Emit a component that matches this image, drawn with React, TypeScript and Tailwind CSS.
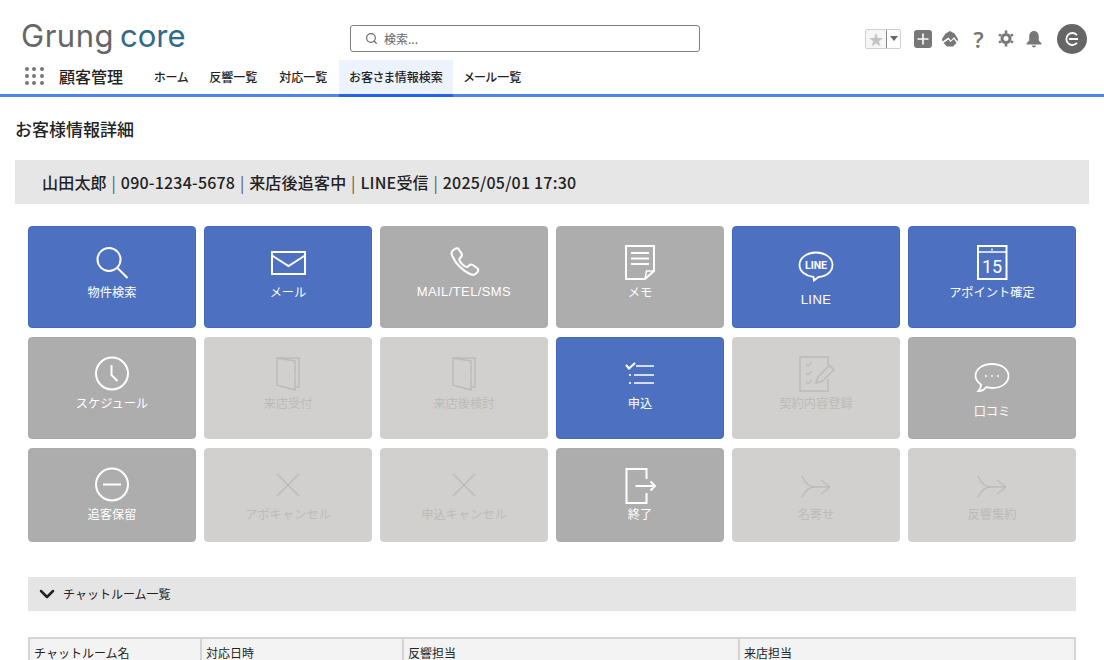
import { ChevronDown, Search } from "lucide-react";
import type { ReactNode } from "react";

const jp = { fontFamily: '"Noto Sans CJK JP", "Noto Sans", sans-serif' };

function Svg({ children }: { children: ReactNode }) {
  return (
    <svg width="44" height="44" viewBox="0 0 44 44" fill="none" stroke="currentColor" strokeWidth="2">
      {children}
    </svg>
  );
}

const icons: Record<string, ReactNode> = {
  search: (
    <Svg>
      <circle cx="19" cy="19.5" r="11.5" />
      <path d="M27.5 28 L37.5 38" />
    </Svg>
  ),
  mail: (
    <Svg>
      <rect x="6" y="12" width="33" height="22" />
      <path d="M6 15.5 L22.5 26 L39 15.5" />
    </Svg>
  ),
  phone: (
    <Svg>
      <path d="M12 9.5 C9.5 11 9 13.5 10.5 16.5 C14 24 20 30 28 34 C31 35.5 34 34.5 35.5 32 C36.5 30.5 36.5 29 35 28 L30.5 24.8 C29 24 28 24.4 27 25.5 L25.5 27 C24 27.5 22.5 26.5 20.5 24.5 C18.5 22.5 17 20 17.5 18.5 L19 17 C20 16 20.2 15 19.5 13.5 L16.5 9 C15.5 7.5 13.5 8.5 12 9.5 Z" />
    </Svg>
  ),
  memo: (
    <Svg>
      <path d="M27 39 H8 V6 H36 V31 Z" />
      <path d="M13 13 H31 M13 18.5 H31 M13 24 H31" />
      <path d="M36 31 H28.5 L27 39" strokeWidth="1.5" />
    </Svg>
  ),
  line: (
    <svg width="44" height="44" viewBox="0 0 44 44" fill="none">
      <g transform="translate(0 1.5)">
        <path
          d="M22 7 C31.5 7 38.5 12.5 38.5 19.5 C38.5 26 32.5 31 24.5 31.5 L20 35 L19.5 31.5 C11.5 30.5 5.5 26 5.5 19.5 C5.5 12.5 12.5 7 22 7 Z"
          stroke="currentColor"
          strokeWidth="1.8"
        />
        <text x="22" y="23.5" textAnchor="middle" fill="currentColor" fontSize="10.5" fontWeight="700" fontFamily="Roboto, sans-serif">
          LINE
        </text>
      </g>
    </svg>
  ),
  calendar: (
    <svg width="44" height="44" viewBox="0 0 44 44" fill="none" stroke="currentColor" strokeWidth="2">
      <rect x="8" y="6" width="28.5" height="33" />
      <path d="M8 12 H36.5" strokeWidth="1.5" />
      <circle cx="22" cy="9.5" r="0.9" fill="currentColor" stroke="none" />
      <text x="22" y="33" textAnchor="middle" fill="currentColor" stroke="none" fontSize="18" fontFamily="Roboto, sans-serif">
        15
      </text>
    </svg>
  ),
  clock: (
    <Svg>
      <circle cx="22" cy="22.5" r="16" />
      <path d="M21.5 14 V24 L27.5 30" />
    </Svg>
  ),
  door: (
    <Svg>
      <path d="M11 7 H33 V36 H29" strokeWidth="1.5" />
      <path d="M11 7 L29 10 V39 L11 34 Z" strokeWidth="1.5" />
      <circle cx="23" cy="25" r="0.7" fill="currentColor" stroke="none" />
    </Svg>
  ),
  checklist: (
    <Svg>
      <path d="M8 14 L11 17.5 L17 12" strokeWidth="2" />
      <path d="M18 15 H36 M16 24 H36 M16 32 H36" strokeWidth="1.6" />
      <circle cx="12" cy="24" r="1.1" fill="currentColor" stroke="none" />
      <circle cx="12" cy="32" r="1.1" fill="currentColor" stroke="none" />
    </Svg>
  ),
  contract: (
    <Svg>
      <path d="M34 14 V6 H6 V40 H34 V28" strokeWidth="1.5" />
      <path d="M12 13 L14 15 L18 11 M12 22 L14 24 L18 20 M12 31 L14 33 L18 29" strokeWidth="1.2" />
      <path d="M22 32 L24 26 L35.5 14.5 L40 18.5 L28.5 30 Z" strokeWidth="1.5" />
    </Svg>
  ),
  chat: (
    <Svg>
      <path
        d="M22 9 C31.5 9 38.5 14 38.5 21 C38.5 28 31.5 33 22 33 C20 33 18 32.7 16 32.2 C14.5 34.5 12 36 8.5 36 C10 34.5 11 32 11 29.5 C7.5 27 5.5 24.5 5.5 21 C5.5 14 12.5 9 22 9 Z"
        strokeWidth="1.8"
      />
      <circle cx="16" cy="21" r="0.9" fill="currentColor" stroke="none" />
      <circle cx="22" cy="21" r="0.9" fill="currentColor" stroke="none" />
      <circle cx="28" cy="21" r="0.9" fill="currentColor" stroke="none" />
    </Svg>
  ),
  minus: (
    <Svg>
      <circle cx="22" cy="22.5" r="16" />
      <path d="M13 22.5 H31" />
    </Svg>
  ),
  cross: (
    <Svg>
      <path d="M11 12 L33 34 M33 12 L11 34" strokeWidth="1.3" />
    </Svg>
  ),
  exit: (
    <Svg>
      <path d="M28.5 17 V7 H8.5 V41 H28.5 V31" />
      <path d="M17.5 24 H37 M32.5 19.5 L37 24 L32.5 28.5" />
    </Svg>
  ),
  merge: (
    <Svg>
      <path d="M8 14 C11 21 15 25 21 25 H36 M8 35 C11 29 15 25 21 25 M27 18 L36 25 L27 32" strokeWidth="1.3" />
    </Svg>
  ),
};

type Kind = "blue" | "gray" | "off";

const buttons: { label: string; icon: string; kind: Kind; low?: boolean; latin?: boolean }[] = [
  { label: "物件検索", icon: "search", kind: "blue" },
  { label: "メール", icon: "mail", kind: "blue" },
  { label: "MAIL/TEL/SMS", icon: "phone", kind: "gray", latin: true },
  { label: "メモ", icon: "memo", kind: "gray" },
  { label: "LINE", icon: "line", kind: "blue", low: true, latin: true },
  { label: "アポイント確定", icon: "calendar", kind: "blue" },
  { label: "スケジュール", icon: "clock", kind: "gray" },
  { label: "来店受付", icon: "door", kind: "off" },
  { label: "来店後検討", icon: "door", kind: "off" },
  { label: "申込", icon: "checklist", kind: "blue" },
  { label: "契約内容登録", icon: "contract", kind: "off" },
  { label: "口コミ", icon: "chat", kind: "gray", low: true },
  { label: "追客保留", icon: "minus", kind: "gray" },
  { label: "アポキャンセル", icon: "cross", kind: "off" },
  { label: "申込キャンセル", icon: "cross", kind: "off" },
  { label: "終了", icon: "exit", kind: "gray" },
  { label: "名寄せ", icon: "merge", kind: "off" },
  { label: "反響集約", icon: "merge", kind: "off" },
];

const kindClass: Record<Kind, string> = {
  blue: "bg-[#4d71c0] border-[#4268bd] text-white",
  gray: "bg-[#adadad] border-[#a9a9a9] text-white",
  off: "bg-[#d1d0ce] border-[#d1d0ce] text-[#bcbbb9]",
};

function ActionButton({ label, icon, kind, low, latin }: (typeof buttons)[number]) {
  return (
    <button className={`flex flex-col items-center rounded-[4px] border pt-[13px] ${kindClass[kind]}`}>
      <span className={`flex w-[44px] justify-center ${low ? "h-[52px] items-center" : "h-[44px]"}`}>{icons[icon]}</span>
      <span
        className={`-mt-[1px] leading-[18px] ${latin ? "text-[13px] tracking-[0.4px]" : "text-[12.25px]"}`}
        style={latin ? { fontFamily: '"Liberation Sans", sans-serif' } : undefined}
      >
        {label}
      </span>
    </button>
  );
}

function Header() {
  return (
    <header className="border-b-[3px] border-[#4a86f0]">
      <div className="flex h-[60px] items-center pl-[21px] pr-[17px] pt-[17px]">
        <div className="w-[329px] pb-[7px] text-[31px] leading-none" style={{ fontFamily: "Inter, sans-serif" }}>
          <span className="tracking-[0.5px] text-[#666666]">Grung</span>
          <span className="ml-[6px] text-[#2f6a87]">core</span>
        </div>
        <div className="flex h-[27px] w-[350px] items-center gap-[6px] rounded-[3px] border border-[#808080] pl-[14px] text-[12px] text-[#666666]">
          <Search size={13} strokeWidth={2.2} />
          検索...
        </div>
        <div className="ml-auto flex items-center text-[#777777]">
          <div className="flex h-[20px] w-[36px] rounded-[2px] border border-[#cfcfcf]">
            <div className="flex w-[20px] items-center justify-center bg-[#f6f6f6] text-[15px] leading-none text-[#c4c4c4]">★</div>
            <div className="flex flex-1 items-center justify-center rounded-r-[2px] border-l border-[#888888]">
              <span className="h-0 w-0 border-x-[4px] border-t-[5px] border-x-transparent border-t-[#666666]" />
            </div>
          </div>
          <div className="ml-[13px] flex h-[18px] w-[18px] items-center justify-center rounded-[3px] bg-[#777777]">
            <svg width="12" height="12" viewBox="0 0 12 12" stroke="white" strokeWidth="1.6">
              <path d="M6 0.5 V11.5 M0.5 6 H11.5" />
            </svg>
          </div>
          <svg className="ml-[9px]" width="18" height="18" viewBox="0 0 18 18" fill="currentColor">
            <path d="M9 1 L13.5 3.5 L17 9 L16.5 11.5 L13 7 L10 10.5 L7.5 7.5 L1.5 11.5 L1 9 L4.5 3.5 Z" />
            <path d="M2.5 13 L7.5 9.5 L9.5 12 L13 9 L15.5 13 L12 16.5 H6 Z" />
          </svg>
          <span className="ml-[13px] w-[13px] text-center text-[22px] font-semibold leading-none" style={{ fontFamily: "Noto Sans" }}>?</span>
          <svg className="ml-[13px]" width="16" height="17" viewBox="0 0 16 17" fill="none" stroke="currentColor">
            <circle cx="8" cy="8.5" r="4" strokeWidth="3" />
            <path d="M8 0.5 V3 M8 14 V16.5 M1 4.5 L3 5.7 M13 11.3 L15 12.5 M1 12.5 L3 11.3 M13 5.7 L15 4.5" strokeWidth="2.6" />
          </svg>
          <svg className="ml-[12px]" width="16" height="18" viewBox="0 0 16 18" fill="currentColor">
            <path d="M8 1 C11 1 12.8 3.5 12.8 7 V10.5 L15.5 13.5 V14.5 H0.5 V13.5 L3.2 10.5 V7 C3.2 3.5 5 1 8 1 Z" />
            <path d="M6 15.5 H10 C10 16.8 9 17.5 8 17.5 C7 17.5 6 16.8 6 15.5 Z" />
          </svg>
          <div className="ml-[15px] flex h-[30px] w-[30px] items-center justify-center rounded-full bg-[#666666]">
            <svg width="14" height="14" viewBox="0 0 14 14" fill="none" stroke="white" strokeWidth="1.8">
              <path d="M12 3.2 A6 6 0 1 0 12 10.8 M4 7 H13" />
            </svg>
          </div>
        </div>
      </div>
      <div className="flex h-[34px] items-stretch pl-[25px]">
        <div className="grid w-[19px] grid-cols-3 content-center gap-[3px] pb-[2px]">
          {Array.from({ length: 9 }).map((_, i) => (
            <span key={i} className="h-[4px] w-[4px] rounded-full bg-[#777777]" />
          ))}
        </div>
        <div className="ml-[15px] flex w-[85px] items-center pb-[2px] text-[16px] font-medium text-[#222222]">顧客管理</div>
        <nav className="flex gap-[1px] text-[12px] font-medium text-[#222222] [font-feature-settings:'palt']">
          <a className="flex items-center px-[10px]">ホーム</a>
          <a className="mr-[1px] flex items-center px-[10px]">反響一覧</a>
          <a className="mr-[1px] flex items-center px-[10px]">対応一覧</a>
          <a className="-mb-[3px] flex items-center border-b-[3px] border-[#2563eb] bg-[#edf3fd] px-[10px]">お客さま情報検索</a>
          <a className="flex items-center px-[10px]">メール一覧</a>
        </nav>
      </div>
    </header>
  );
}

const summary = ["山田太郎", "090-1234-5678", "来店後追客中", "LINE受信", "2025/05/01 17:30"];

export default function App() {
  return (
    <div className="h-[660px] overflow-hidden bg-white text-[#222222]" style={jp}>
      <Header />
      <main>
        <h1 className="ml-[15px] mt-[22px] text-[17px] font-medium leading-[20px]">お客様情報詳細</h1>
        <div className="mx-[15px] mt-[21px] flex h-[44px] items-center bg-[#e6e6e6] pl-[27px] text-[16px] font-medium tracking-[0.2px]">
          {summary.map((s, i) => (
            <span key={s} className="flex items-center">
              {i > 0 && <span className="w-[14px] text-center font-normal text-[#555555]">|</span>}
              {s}
            </span>
          ))}
        </div>
        <div className="mx-[28px] mt-[22px] grid grid-cols-6 grid-rows-[102px_102px_94px] gap-x-[8px] gap-y-[9px]">
          {buttons.map((b, i) => (
            <ActionButton key={i} {...b} />
          ))}
        </div>
        <div className="mx-[28px] mt-[35px] flex h-[34px] items-center gap-[4px] bg-[#e5e5e5] pl-[7px] text-[12px]">
          <ChevronDown size={24} strokeWidth={2.5} />
          チャットルーム一覧
        </div>
        <table className="mx-[28px] mt-[26px] w-[1048px] table-fixed border-collapse border-2 border-[#d4d4d4] text-[12px]">
          <thead>
            <tr className="bg-[#f3f3f3] text-left">
              <th className="w-[172px] border-r-2 border-[#d4d4d4] px-[4px] py-[5px] font-normal">チャットルーム名</th>
              <th className="w-[202px] border-r-2 border-[#d4d4d4] px-[4px] py-[5px] font-normal">対応日時</th>
              <th className="w-[336px] border-r-2 border-[#d4d4d4] px-[4px] py-[5px] font-normal">反響担当</th>
              <th className="px-[4px] py-[5px] font-normal">来店担当</th>
            </tr>
          </thead>
        </table>
      </main>
    </div>
  );
}
